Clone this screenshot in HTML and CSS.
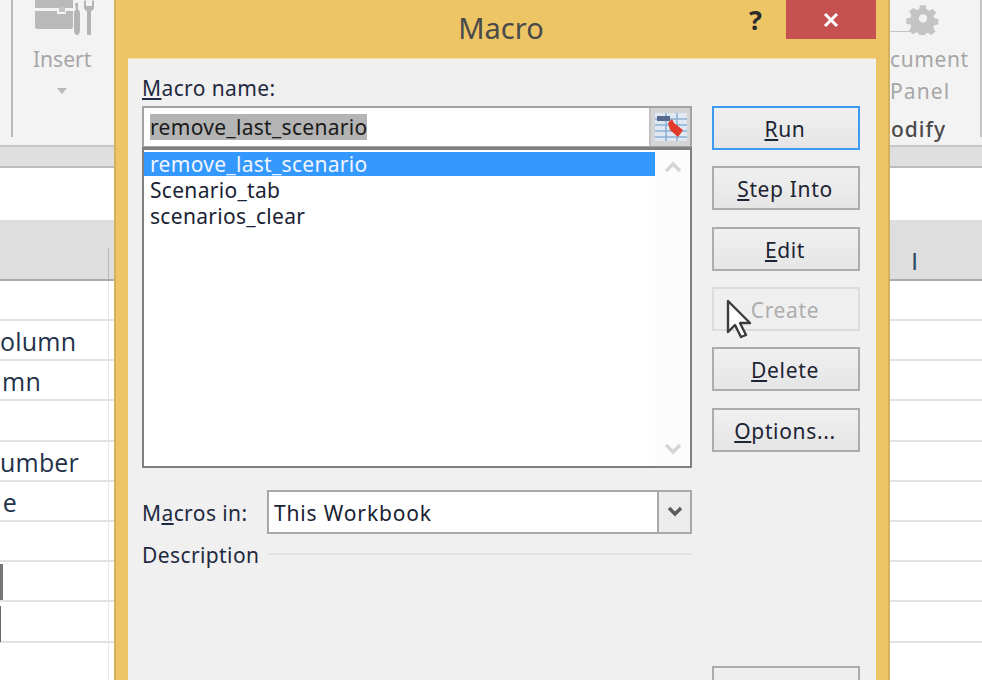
FILE: index.html
```html
<!DOCTYPE html>
<html lang="en">
<head>
<meta charset="utf-8">
<title>Macro</title>
<link rel="stylesheet" href="styles.css">
</head>
<body>
<div class="app">
  <header class="ribbon">
    <div class="rgroup-left">
      <div class="insert">
        <svg class="insert-icon" width="62" height="38" viewBox="0 0 62 38"><path d="M1 0h38v9H1zM1 12h22v3h9v-3h7v16q0 2-2 2H3q-2 0-2-2z" fill="#b9b9b9"/><path d="M25 8h6v5h-6z" fill="#c4c4c4"/><path d="M41 4h3v7h1l1 3v16q0 6-3 6t-3-6V14l1-3h1z" fill="#b4b4b4"/><path d="M50 2v6q0 3 3 4v24h4V12q3-1 3-4V2l-2-1v6h-6V1z" fill="#b4b4b4"/></svg>
        <span class="insert-label">Insert</span>
        <span class="caret"></span>
      </div>
    </div>
    <div class="rgroup-right">
      <div class="doc">
        <span class="doc-rule"></span>
        <svg class="gear" width="34" height="32" viewBox="0 0 36 36"><path fill="#c4c4c4" fill-rule="evenodd" d="M14-2h8l1 6 4 2 5-3 5 6-4 5 1 3 6 1v8l-6 1-1 4 3 5-6 5-5-3-3 1-1 6h-8l-1-6-4-2-5 3-5-6 3-5-1-3-6-1v-8l6-1 1-4-3-5 6-5 5 3 3-1zM18 11a6 6 0 1 0 .01 0z" transform="translate(4 4) scale(.78)"/></svg>
        <span class="doc-l1">cument</span>
        <span class="doc-l2">Panel</span>
        <span class="doc-l3">odify</span>
      </div>
    </div>
  </header>
  <div class="band"></div>
  <div class="blank"></div>
  <div class="colhead"><span class="col-i">I</span></div>
  <div class="rows">
    <div class="row"></div>
    <div class="row"><span class="cell">olumn</span></div>
    <div class="row"><span class="cell short">mn</span></div>
    <div class="row"></div>
    <div class="row"><span class="cell">umber</span></div>
    <div class="row"><span class="cell shortest">e</span></div>
    <div class="row"></div>
    <div class="row"><span class="mark"></span></div>
    <div class="row"><span class="mark thin"></span></div>
    <div class="row"></div>
  </div>

  <section class="dialog">
    <div class="titlebar">
      <span class="title">Macro</span>
      <span class="help">?</span>
      <span class="close"><svg width="16" height="16" viewBox="0 0 16 16"><path d="M2 2l12 12M14 2L2 14" stroke="#fff" stroke-width="3"/></svg></span>
    </div>
    <div class="client">
      <div class="left">
        <label class="label name-label"><u>M</u>acro name:</label>
        <div class="name-box">
          <div class="name-field"><span class="sel">remove_last_scenario</span></div>
          <div class="ref-btn">
            <svg width="34" height="32" viewBox="0 0 34 32"><rect x="1" y="2" width="32" height="28" fill="#dfe8f3"/><path d="M1 8h32M1 14h32M1 20h32M1 26h32M12 2v28M23 2v28" stroke="#8fb0d6" stroke-width="1.6"/><rect x="3" y="5" width="13" height="5" fill="#55698c"/><path d="M14 12l4-4 2 4 9 7-2 3-3 4-8-7z" fill="#e23a2c"/></svg>
          </div>
        </div>
        <div class="list">
          <div class="items">
            <div class="item active">remove_last_scenario</div>
            <div class="item">Scenario_tab</div>
            <div class="item">scenarios_clear</div>
          </div>
          <div class="scroll">
            <svg width="18" height="12" viewBox="0 0 18 12"><path d="M2 10l7-7 7 7" fill="none" stroke="#d4d4d4" stroke-width="3.5"/></svg>
            <svg width="18" height="12" viewBox="0 0 18 12"><path d="M2 2l7 7 7-7" fill="none" stroke="#d4d4d4" stroke-width="3.5"/></svg>
          </div>
        </div>
        <div class="macros-row">
          <label class="label macros-label">M<u>a</u>cros in:</label>
          <div class="combo">
            <span class="combo-text">This Workbook</span>
            <span class="combo-btn"><svg width="16" height="12" viewBox="0 0 16 12"><path d="M2 2l6 6 6-6" fill="none" stroke="#5c5c5c" stroke-width="3.5"/></svg></span>
          </div>
        </div>
        <div class="desc-row">
          <span class="label">Description</span>
          <span class="desc-line"></span>
        </div>
      </div>
      <div class="buttons">
        <button class="btn default"><u>R</u>un</button>
        <button class="btn"><u>S</u>tep Into</button>
        <button class="btn"><u>E</u>dit</button>
        <button class="btn disabled">Create</button>
        <button class="btn"><u>D</u>elete</button>
        <button class="btn"><u>O</u>ptions...</button>
        <button class="btn cancel">Cancel</button>
      </div>
    </div>
  </section>

  <svg class="cursor" width="28" height="40" viewBox="0 0 28 40"><path d="M2 2v31l7-7 6 12 5-2-6-12h10z" fill="#fff" stroke="#3c3c3c" stroke-width="2.4" stroke-linejoin="round"/></svg>
</div>
</body>
</html>
```
FILE: styles.css
```css
* { box-sizing: border-box; }
html, body { margin: 0; padding: 0; }
body { width: 982px; height: 680px; overflow: hidden; background: #fff; }
.app {
  position: relative;
  width: 982px;
  height: 680px;
  overflow: hidden;
  font-family: "Noto Sans", "Open Sans", sans-serif;
  color: #1d2433;
}

/* Ribbon behind the dialog */
.ribbon {
  height: 147px;
  background: #f3f3f3;
  border-bottom: 2px solid #c6c6c6;
  display: flex;
  justify-content: space-between;
}
.rgroup-left {
  width: 114px;
  height: 137px;
  padding-left: 11px;
}
.insert {
  height: 137px;
  border-left: 2px solid #b9b9b9;
  padding-left: 20px;
  display: flex;
  flex-direction: column;
}
.insert-icon { margin-top: -1px; margin-left: 1px; display: block; flex: none; }
.insert-label { font-size: 21px; line-height: 30px; margin-top: 7px; color: #a6a6a6; }
.caret {
  width: 0;
  height: 0;
  margin: 14px 0 0 24px;
  border: 5px solid transparent;
  border-top: 6px solid #b9b9b9;
}
.rgroup-right {
  width: 92px;
  height: 137px;
  border-right: 2px solid #c4c4c4;
}
.doc { display: flex; flex-direction: column; height: 100%; position: relative; }
.doc-rule { position: absolute; left: 0; top: 31px; width: 22px; height: 1px; background: #c4c4c4; }
.gear { position: absolute; left: 16px; top: 3px; }
.doc-l1, .doc-l2, .doc-l3 { font-size: 21px; line-height: 30px; color: #a6a6a6; white-space: nowrap; }
.doc-l1 { margin-top: 44px; text-align: right; padding-right: 17px; letter-spacing: .6px; }
.doc-l2 { margin-top: 2px; text-align: right; padding-right: 41px; letter-spacing: 1.1px; }
.doc-l3 { margin-top: 8px; text-align: right; padding-right: 34px; color: #4a4a4a; letter-spacing: 1px; font-weight: 500; }

.band { height: 21px; background: #dfdfdf; border-bottom: 2px solid #bdbdbd; }
.blank { height: 52px; background: #fff; }
.colhead {
  height: 61px;
  background: #dedede;
  border-bottom: 2px solid #a9a9a9;
  display: flex;
  justify-content: flex-end;
  position: relative;
}
.colhead::before {
  content: "";
  position: absolute;
  left: 108px;
  top: 28px;
  bottom: 0;
  width: 1px;
  background: #b8b8b8;
}
.col-i {
  font-family: "Liberation Sans", sans-serif;
  font-size: 24px;
  line-height: 30px;
  margin: 27px 64px 0 0;
  color: #2d4a66;
}
.rows { display: flex; flex-direction: column; }
.row {
  height: 40.2px;
  border-bottom: 2px solid #e2e2e2;
  display: flex;
  align-items: center;
  position: relative;
  flex: none;
}
.row::before {
  content: "";
  position: absolute;
  left: 108px;
  top: 0;
  bottom: -2px;
  width: 1px;
  background: #ebe7e7;
}
.row:first-child { height: 40px; }
.cell {
  font-family: "Open Sans", sans-serif;
  font-size: 25px;
  line-height: 30px;
  margin-top: 2px;
  color: #22314a;
  width: 69px;
  text-align: right;
  white-space: nowrap;
  letter-spacing: .2px;
}
.cell.short { width: 41px; }
.cell.shortest { width: 17px; }
.mark { width: 3px; height: 36px; background: #777; margin-top: 2px; }
.mark.thin { width: 1px; background: #666; margin-top: 5px; }

/* Dialog window */
.dialog {
  position: absolute;
  left: 114px;
  top: 0;
  width: 776px;
  height: 680px;
  background: #edc565;
  border-left: 2px solid #d4b15f;
  border-right: 2px solid #d4b15f;
  display: flex;
  flex-direction: column;
}
.titlebar {
  height: 58px;
  position: relative;
  flex: none;
  text-align: center;
}
.title { font-size: 29px; line-height: 56px; color: #4a4a4a; margin-right: 2px; }
.help {
  position: absolute;
  left: 633px;
  top: 2px;
  font-weight: 700;
  font-size: 27px;
  line-height: 36px;
  color: #2b2b2b;
}
.close {
  position: absolute;
  right: 12px;
  top: 0;
  width: 90px;
  height: 39px;
  background: #c75050;
  display: flex;
  align-items: center;
  justify-content: center;
}
.client {
  flex: 1;
  margin: 0 12px 0 12px;
  background: #f0f0f0;
  display: flex;
  padding: 47px 16px 0 14px;
  border-top: 1px solid #f3dca0;
}
.left { width: 550px; position: relative; }
.label { font-size: 21px; line-height: 28px; white-space: nowrap; color: #1f2a40; letter-spacing: .4px; }
.name-label { display: block; margin-top: -32px; height: 32px; }
.name-box {
  height: 42px;
  border: 2px solid #a3a3a3;
  background: #fff;
  display: flex;
}
.name-field { flex: 1; padding: 6px 0 0 6px; }
.sel {
  display: inline-block;
  background: #b4b4b4;
  font-size: 21px;
  line-height: 26px;
  width: 217px;
  white-space: nowrap;
  color: #1a1a1a;
  letter-spacing: .3px;
}
.ref-btn {
  width: 41px;
  border-left: 2px solid #c2c2c2;
  background: #d4d4d4;
  display: flex;
  align-items: center;
  justify-content: center;
}
.list {
  height: 321px;
  margin-top: -1px;
  border: 2px solid #7f7f7f;
  border-top-width: 3px;
  background: #fff;
  display: flex;
}
.items { width: 511px; padding-top: 2px; }
.item {
  height: 26px;
  font-size: 21px;
  line-height: 24px;
  padding-left: 6px;
  white-space: nowrap;
  color: #1a2233;
  letter-spacing: .3px;
}
.item.active { height: 24px; margin-bottom: 2px; background: #3399ff; color: #f2f4ff; line-height: 25px; }
.scroll {
  flex: 1;
  background: #fcfcfc;
  display: flex;
  flex-direction: column;
  align-items: center;
  justify-content: space-between;
  padding: 11px 0 11px;
}
.macros-row { display: flex; align-items: center; margin-top: 22px; height: 44px; }
.macros-label { width: 125px; padding-top: 2px; }
.combo {
  flex: 1;
  height: 44px;
  border: 2px solid #a9a9a9;
  background: #fff;
  display: flex;
  align-items: center;
}
.combo-text { flex: 1; font-size: 21px; padding: 2px 0 0 5px; color: #1a2233; white-space: nowrap; letter-spacing: .85px; }
.combo-btn {
  width: 33px;
  height: 100%;
  border-left: 2px solid #a9a9a9;
  background: #ececec;
  display: flex;
  align-items: center;
  justify-content: center;
}
.desc-row { display: flex; align-items: center; gap: 10px; margin-top: 7px; height: 28px; }
.desc-line { flex: 1; height: 2px; background: #e3e3e3; margin-top: -3px; }

.buttons { margin-left: 20px; width: 148px; display: flex; flex-direction: column; gap: 16.35px; }
.btn {
  flex: none;
  height: 44px;
  border: 2px solid #acacac;
  background: linear-gradient(#f0f0f0, #e5e5e5);
  font: inherit;
  font-size: 21px;
  line-height: 26px;
  padding: 2px 2px 0 0;
  letter-spacing: .65px;
  color: #1d2433;
}
.btn.default { border-color: #3d9bf0; }
.btn.disabled { border-color: #dcdcdc; background: #efefef; color: #adadad; }
.btn.cancel { margin-top: 198px; }

.cursor { position: absolute; left: 726px; top: 299px; }
```
